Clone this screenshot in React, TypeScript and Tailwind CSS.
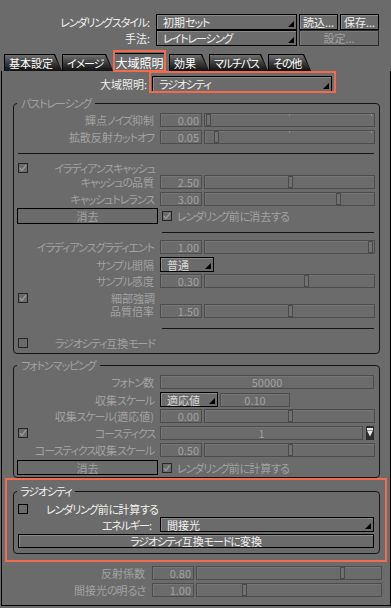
const dim = 'text-[#a2a2a2]';
const lit = 'text-[#f0f0f0]';

// kana runs are set tighter than kanji, like the narrow UI font in the original
function J({ s }: { s: string }) {
  return (
    <>
      {s.split(/([\u3040-\u30ff]+)/).map((p, i) =>
        i % 2 === 1 ? (
          <span key={i} className="tracking-[-1.1px]">
            {p}
          </span>
        ) : (
          p
        ),
      )}
    </>
  );
}

function Tri() {
  return (
    <svg width="6" height="6" viewBox="0 0 6 6" className="self-end mb-[2px] shrink-0">
      <polygon points="6,0 6,6 0,6" fill="#000" />
    </svg>
  );
}

function Dropdown({ text, cls, tone = lit }: { text: string; cls: string; tone?: string }) {
  return (
    <div className={`flex justify-between border border-black shadow-[inset_1px_1px_0_#8a8a8a] pl-[6px] pr-[2px] ${cls}`}>
      <span className={`self-center whitespace-nowrap ${tone}`}>
        <J s={text} />
      </span>
      <Tri />
    </div>
  );
}

function Btn({ text, cls, on = true }: { text: string; cls: string; on?: boolean }) {
  return (
    <div
      className={`flex items-center justify-center whitespace-nowrap border ${on ? 'border-black shadow-[inset_1px_1px_0_#8a8a8a] ' + lit : 'border-[#2a2a2a] ' + dim} ${cls}`}
    >
      <J s={text} />
    </div>
  );
}

function Field({ value, cls, center }: { value: string; cls: string; center?: boolean }) {
  return (
    <div
      className={`flex items-center h-[14px] border border-[#4c4c4c] shadow-[inset_1px_1px_0_#757575] ${center ? 'justify-center' : 'justify-end pr-[2px]'} ${dim} ${cls}`}
    >
      {value}
    </div>
  );
}

function Slider({ thumb, cls, ticks }: { thumb: string; cls: string; ticks?: boolean }) {
  return (
    <div className={`relative flex items-center h-[14px] border border-[#4c4c4c] shadow-[inset_1px_1px_0_#757575] ${cls}`}>
      {ticks && (
        <>
          <div className="absolute top-0 left-[84px] w-px h-[2px] bg-[#8c8c8c]" />
          <div className="absolute top-0 right-[2px] w-px h-[2px] bg-[#8c8c8c]" />
        </>
      )}
      <div className={`w-[5px] h-[12px] border border-[#4a4a4a] bg-[#717171] shrink-0 ${thumb}`} />
    </div>
  );
}

function Check({ on, dark }: { on?: boolean; dark?: boolean }) {
  return (
    <div
      className={`w-[10px] h-[10px] shrink-0 border flex items-center justify-center ${dark ? 'border-black' : 'border-[#262626]'}`}
    >
      {on && (
        <svg width="8" height="8" viewBox="0 0 8 8">
          <polyline points="1,4.2 3,6.5 7,1.2" fill="none" stroke="#9c9c9c" strokeWidth="1.3" />
        </svg>
      )}
    </div>
  );
}

function Label({ text }: { text: string }) {
  return (
    <div className={`w-[146px] pr-[6px] text-right leading-[12px] whitespace-nowrap shrink-0 ${dim}`}>
      <J s={text} />
    </div>
  );
}

function ParamRow({ label, value, thumb, mt, ticks }: { label: string; value: string; thumb: string; mt: string; ticks?: boolean }) {
  return (
    <div className={`flex items-center ${mt}`}>
      <Label text={label} />
      <Field value={value} cls="w-[42px]" />
      <Slider thumb={thumb} cls="ml-[2px] w-[171px]" ticks={ticks} />
    </div>
  );
}

function CheckLabel({ text, on, mt }: { text: string; on?: boolean; mt: string }) {
  return (
    <div className={`flex items-center h-[10px] ${mt}`}>
      <div className="w-[146px] flex items-center pl-[4px]">
        <Check on={on} />
        <div className={`flex-1 text-right pr-[5px] leading-[10px] whitespace-nowrap ${dim}`}>
          <J s={text} />
        </div>
      </div>
    </div>
  );
}

function Sep({ cls }: { cls: string }) {
  return <div className={`h-px bg-[#151515] ${cls}`} />;
}

function Tab({ label, cls }: { label: string; cls: string }) {
  return (
    <div className={`h-[17px] bg-black pt-px pl-px [clip-path:polygon(0_0,calc(100%-7px)_0,100%_100%,0_100%)] ${cls}`}>
      <div className="h-full flex items-center pl-[4px] text-white whitespace-nowrap bg-gradient-to-b from-[#707070] via-[#3c3c3c] to-[#111] [clip-path:polygon(0_0,calc(100%-8px)_0,100%_100%,0_100%)]">
        <J s={label} />
      </div>
    </div>
  );
}

export default function App() {
  return (
    <div className="relative w-[391px] h-[608px] overflow-hidden bg-[#6b6b6b] text-[11px] leading-[14px] font-['Noto_Sans_CJK_JP','Noto_Sans',sans-serif] [font-feature-settings:'palt']">
      {/* header rows */}
      <div className="flex items-center h-[16px] mt-[14px]">
        <div className={`w-[156px] pr-[6px] text-right whitespace-nowrap ${lit}`}>
          <J s="レンダリングスタイル:" />
        </div>
        <Dropdown text="初期セット" cls="w-[141px] h-[16px]" />
        <Btn text="読込..." cls="ml-[2px] w-[39px] h-[16px]" />
        <Btn text="保存..." cls="ml-[2px] w-[39px] h-[16px]" />
      </div>
      <div className="flex items-center h-[16px]">
        <div className={`w-[156px] pr-[6px] text-right ${lit}`}>手法:</div>
        <Dropdown text="レイトレーシング" cls="w-[141px] h-[16px]" />
        <Btn text="設定..." on={false} cls="ml-[2px] w-[80px] h-[16px] shadow-[inset_1px_1px_0_#7a7a7a]" />
      </div>

      {/* tabs */}
      <div className="flex items-end h-[18px] mt-[7px] pl-[4px]">
        <Tab label="基本設定" cls="w-[58px]" />
        <Tab label="イメージ" cls="w-[51px]" />
        <div className="h-[18px] w-[53px] border border-b-0 border-black bg-[#6b6b6b] flex items-center justify-center text-white text-[12px]">
          大域照明
        </div>
        <Tab label="効果" cls="ml-[3px] w-[40px]" />
        <Tab label="マルチパス" cls="w-[59px]" />
        <Tab label="その他" cls="w-[43px]" />
      </div>

      {/* panel */}
      <div className="ml-[1px] w-[390px] h-[535px] border-x border-b border-black pt-[5px]">
        <div className="flex items-center h-[16px]">
          <div className={`w-[150px] pr-[5px] text-right ${lit}`}>大域照明:</div>
          <Dropdown text="ラジオシティ" cls="w-[180px] h-[16px]" />
        </div>

        {/* path tracing */}
        <fieldset className="ml-[11px] w-[367px] mt-[5px] border border-[#151515] rounded-[4px] pb-[5px]">
          <legend className={`ml-[3px] px-[4px] leading-[12px] ${dim}`}>
            <J s="パストレーシング" />
          </legend>
          <ParamRow label="輝点ノイズ抑制" value="0.00" thumb="ml-px" mt="mt-[4px]" ticks />
          <ParamRow label="拡散反射カットオフ" value="0.05" thumb="ml-[9px]" mt="mt-[3px]" ticks />
          <Sep cls="mt-[9px] ml-[4px] w-[356px]" />
          <CheckLabel text="イラディアンスキャッシュ" on mt="mt-[9px]" />
          <ParamRow label="キャッシュの品質" value="2.50" thumb="ml-[83px]" mt="mt-[2px]" />
          <ParamRow label="キャッシュトレランス" value="3.00" thumb="ml-[131px]" mt="mt-[3px]" />
          <div className="flex items-center h-[16px] mt-[2px]">
            <Btn text="消去" on={false} cls="ml-[3px] w-[141px] h-[16px] border-black" />
            <div className="ml-[4px]">
              <Check on />
            </div>
            <div className={`ml-[5px] whitespace-nowrap ${dim}`}>
              <J s="レンダリング前に消去する" />
            </div>
          </div>
          <Sep cls="mt-[8px] ml-[148px] w-[212px]" />
          <ParamRow label="イラディアンスグラディエント" value="1.00" thumb="ml-[163px]" mt="mt-[7px]" />
          <div className="flex items-center mt-[3px]">
            <Label text="サンプル間隔" />
            <Dropdown text="普通" tone="text-[#d6d6d6]" cls="w-[54px] h-[15px]" />
          </div>
          <ParamRow label="サンプル感度" value="0.30" thumb="ml-[99px]" mt="mt-[2px]" />
          <CheckLabel text="細部強調" on mt="mt-[5px]" />
          <ParamRow label="品質倍率" value="1.50" thumb="ml-[83px]" mt="mt-px" />
          <Sep cls="mt-[10px] ml-[148px] w-[212px]" />
          <CheckLabel text="ラジオシティ互換モード" mt="mt-[9px]" />
        </fieldset>

        {/* photon mapping */}
        <fieldset className="ml-[11px] w-[367px] mt-[5px] border border-[#151515] rounded-[4px] pb-[2px]">
          <legend className={`ml-[3px] px-[4px] leading-[12px] ${dim}`}>
            <J s="フォトンマッピング" />
          </legend>
          <div className="flex items-center mt-[4px]">
            <Label text="フォトン数" />
            <Field value="50000" center cls="w-[214px]" />
          </div>
          <div className="flex items-center mt-[3px]">
            <Label text="収集スケール" />
            <Dropdown text="適応値" tone="text-[#d6d6d6]" cls="w-[58px] h-[15px]" />
            <Field value="0.10" center cls="ml-[2px] w-[70px]" />
          </div>
          <ParamRow label="収集スケール(適応値)" value="0.00" thumb="ml-[83px]" mt="mt-[2px]" />
          <div className="flex items-center h-[15px] mt-[2px]">
            <div className="w-[146px] flex items-center pl-[4px]">
              <Check on />
              <div className={`flex-1 text-right pr-[5px] ${dim}`}>
                <J s="コースティクス" />
              </div>
            </div>
            <Field value="1" center cls="w-[203px]" />
            <div className="ml-[3px] w-[8px] h-[14px] bg-[#2c2c2c] flex items-center justify-center">
              <svg width="6" height="9" viewBox="0 0 6 9">
                <rect x="0" y="0" width="6" height="2" fill="#e8e8e8" />
                <polygon points="0,2.5 6,2.5 3,8.5" fill="#e8e8e8" />
              </svg>
            </div>
          </div>
          <ParamRow label="コースティクス収集スケール" value="0.50" thumb="ml-[83px]" mt="mt-[3px]" />
          <div className="flex items-center h-[15px] mt-[3px]">
            <Btn text="消去" on={false} cls="ml-[3px] w-[141px] h-[15px] border-black" />
            <div className="ml-[4px]">
              <Check on />
            </div>
            <div className={`ml-[5px] whitespace-nowrap ${dim}`}>
              <J s="レンダリング前に計算する" />
            </div>
          </div>
        </fieldset>

        {/* radiosity */}
        <fieldset className="ml-[11px] w-[367px] mt-[7px] border border-[#151515] rounded-[4px] pb-[5px]">
          <legend className={`ml-[3px] px-[3px] leading-[12px] ${lit}`}>
            <J s="ラジオシティ" />
          </legend>
          <div className="flex items-center h-[10px] mt-[7px] pl-[4px]">
            <Check dark />
            <span className={`ml-[18px] whitespace-nowrap ${lit}`}>
              <J s="レンダリング前に計算する" />
            </span>
          </div>
          <div className="flex items-center mt-[3px]">
            <div className={`w-[146px] pr-[8px] text-right ${lit}`}>
              <J s="エネルギー:" />
            </div>
            <Dropdown text="間接光" cls="w-[214px] h-[15px]" />
          </div>
          <Btn text="ラジオシティ互換モードに変換" cls="ml-[4px] mt-[2px] w-[356px] h-[14px]" />
        </fieldset>

        <div className="flex items-center mt-[12px]">
          <div className={`w-[150px] pr-[7px] text-right ${dim}`}>反射係数</div>
          <Field value="0.80" cls="w-[42px]" />
          <Slider thumb="ml-[143px]" cls="ml-[2px] w-[186px]" />
        </div>
        <div className="flex items-center mt-[3px]">
          <div className={`w-[150px] pr-[7px] text-right ${dim}`}>
            <J s="間接光の明るさ" />
          </div>
          <Field value="1.00" cls="w-[42px]" />
          <Slider thumb="ml-[45px]" cls="ml-[2px] w-[186px]" />
        </div>
      </div>

      {/* annotation highlights */}
      <div className="absolute left-[113px] top-[50px] w-[53px] h-[22px] border-2 border-[#f26b4f]" />
      <div className="absolute left-[149px] top-[71px] w-[187px] h-[22px] border-2 border-[#f26b4f]" />
      <div className="absolute left-[5px] top-[478px] w-[382px] h-[84px] border-2 border-[#f26b4f]" />
    </div>
  );
}
